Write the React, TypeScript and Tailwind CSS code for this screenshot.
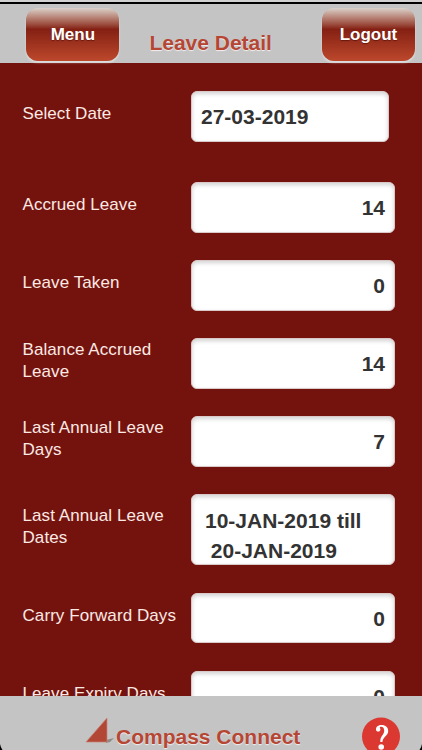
import clsx from 'clsx';

type LeaveRow = {
  label: string;
  value: string;
  kind?: 'date' | 'range';
};

const rows: LeaveRow[] = [
  { label: 'Select Date', value: '27-03-2019', kind: 'date' },
  { label: 'Accrued Leave', value: '14' },
  { label: 'Leave Taken', value: '0' },
  { label: 'Balance Accrued Leave', value: '14' },
  { label: 'Last Annual Leave Days', value: '7' },
  { label: 'Last Annual Leave Dates', value: '10-JAN-2019 till\n 20-JAN-2019', kind: 'range' },
  { label: 'Carry Forward Days', value: '0' },
  { label: 'Leave Expiry Days', value: '0' },
];

function HeaderButton({ label }: { label: string }) {
  return (
    <button className="h-[53px] w-[93px] rounded-[12px] bg-linear-to-b from-[#d9d2cb] via-[#842013] via-40% to-[#bd482c] text-[17px] leading-none font-bold text-white shadow-[0_2px_2px_rgba(255,255,255,0.45)] [text-shadow:0_1px_1px_rgba(60,0,0,0.5)]">
      {label}
    </button>
  );
}

function FieldRow({ label, value, kind }: LeaveRow) {
  return (
    <div className={clsx('flex items-center', kind === 'date' && 'mb-[13.1px]')}>
      <div className="w-[168.5px] shrink-0 pr-[8px] pb-[4.5px] text-[17px] leading-[22px] tracking-[0.08px] text-[#fbe9e4]">
        {label}
      </div>
      <div
        className={clsx(
          'rounded-[6px] border border-[#d9c9c8] bg-white text-[21px] font-bold text-[#333] shadow-[inset_0_2px_4px_rgba(0,0,0,0.18)]',
          kind === 'date' && 'h-[50.5px] w-[198px] pl-[9px] leading-[50px]',
          kind === 'range' && 'h-[71px] w-[204px] pt-[11px] pl-[13px] leading-[30px] whitespace-pre',
          !kind && 'h-[50.5px] w-[204px] pr-[9px] text-right leading-[50px]',
        )}
      >
        {value}
      </div>
    </div>
  );
}

export default function App() {
  return (
    <div className="flex h-[750px] w-[422px] flex-col overflow-hidden bg-[#74130e] font-['Liberation_Sans',Arial,sans-serif]">
      <div className="h-[2px] shrink-0 bg-[#d0d0d0]" />
      <div className="h-[2px] shrink-0 bg-black" />
      <header className="z-10 flex h-[59px] shrink-0 items-start bg-[#c4c4c4] pt-[4px] pl-[26.4px]">
        <HeaderButton label="Menu" />
        <h1 className="mt-[23px] w-[202.6px] pl-[30px] text-[21px] leading-[24px] font-bold text-[#b54634] [text-shadow:0_1px_1px_#f4eeee]">
          Leave Detail
        </h1>
        <HeaderButton label="Logout" />
      </header>
      <main className="flex min-h-0 flex-1 flex-col gap-[27.5px] overflow-hidden pt-[28px] pl-[22.5px]">
        {rows.map((row) => (
          <FieldRow key={row.label} {...row} />
        ))}
      </main>
      <footer className="relative flex h-[54px] shrink-0 items-start bg-[#c4c4c4] pl-[85px]">
        <svg className="mt-[22px] h-[26px] w-[30px] shrink-0" viewBox="0 0 30 26">
          <path d="M21 22L29 20L25 24L21 25Z" fill="#8f8986" />
          <path d="M22 -3V21H1Z" transform="translate(0 3)" fill="#b24735" stroke="#c88476" strokeWidth="0.7" />
        </svg>
        <span className="mt-[29px] ml-[1px] text-[21px] leading-[24px] font-bold whitespace-nowrap text-[#b54634] [text-shadow:0_1px_1px_#f4eeee]">
          Compass Connect
        </span>
        <svg className="absolute top-[21px] left-[361px]" width="40" height="40" viewBox="0 0 40 40">
          <circle cx="20" cy="19.5" r="19" fill="#db3832" />
          <path
            d="M15 12.4C15 9.6 17.3 8 20.6 8C24.7 8 27.2 10.4 27.2 14C27.2 19.2 21.8 19.4 21.4 25H19.4C18.8 19 23.2 18.2 23.2 13.8C23.2 11.2 22 9.7 20.2 9.7C19.3 9.7 18.8 10 18.8 10.5C18.8 11.1 19.4 11.5 19.4 12.5C19.4 13.8 18.5 14.6 17.3 14.6C15.9 14.6 15 13.8 15 12.4Z"
            fill="#fff"
          />
          <circle cx="20.2" cy="30" r="2.8" fill="#fff" />
        </svg>
        {/* rounded device corners */}
        <svg className="absolute bottom-0 left-0" width="3" height="8" viewBox="0 0 3 8">
          <path d="M0 2Q0.5 5 2.5 8H0Z" fill="#000" />
        </svg>
        <svg className="absolute right-0 bottom-0" width="3" height="8" viewBox="0 0 3 8">
          <path d="M3 2Q2.5 5 0.5 8H3Z" fill="#000" />
        </svg>
      </footer>
    </div>
  );
}
